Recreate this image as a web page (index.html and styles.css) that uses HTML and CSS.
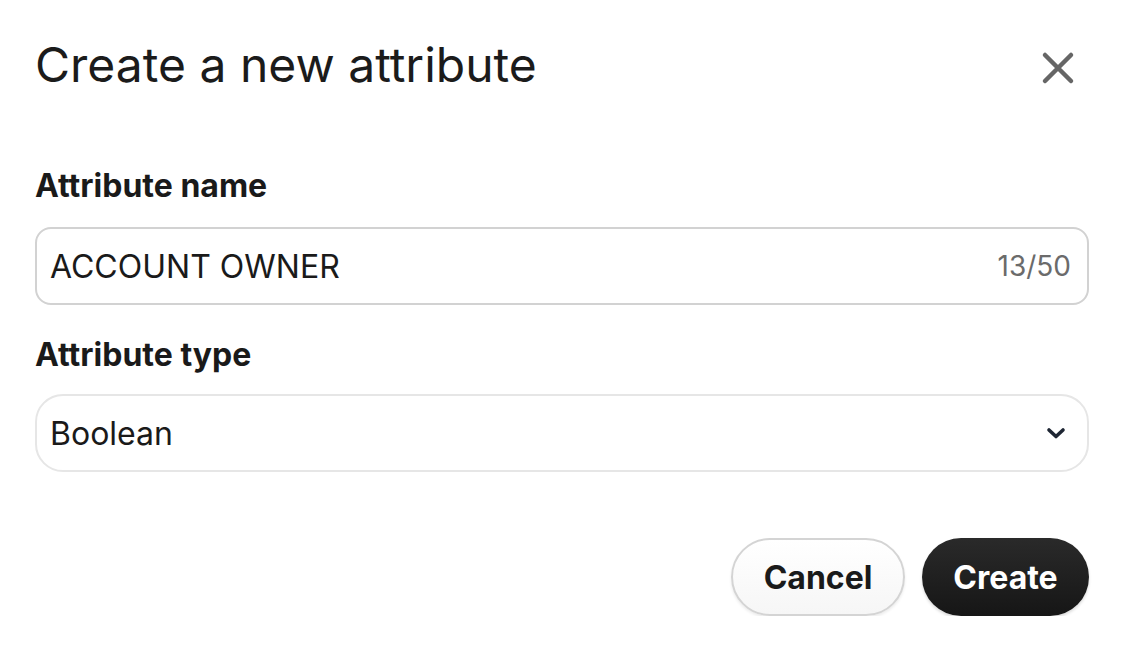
FILE: index.html
```html
<!DOCTYPE html>
<html lang="en">
<head>
<meta charset="utf-8">
<title>Create a new attribute</title>
<link rel="stylesheet" href="styles.css">
</head>
<body>
<div class="dialog">
  <div class="header">
    <h1 class="title">Create a new attribute</h1>
    <button class="close" aria-label="Close">
      <svg width="34" height="34" viewBox="0 0 34 34"><path d="M4 4 L30 30 M30 4 L4 30" stroke="#666" stroke-width="4.5" stroke-linecap="round" fill="none"/></svg>
    </button>
  </div>
  <div class="field field-name">
    <label class="label">Attribute name</label>
    <div class="input">
      <span class="value">ACCOUNT OWNER</span>
      <span class="counter">13/50</span>
    </div>
  </div>
  <div class="field field-type">
    <label class="label">Attribute type</label>
    <div class="select">
      <span class="value">Boolean</span>
      <svg class="chevron" width="22" height="14" viewBox="0 0 22 14"><path d="M4 4 L11 10.5 L18 4" stroke="#1e2633" stroke-width="3.6" stroke-linecap="round" stroke-linejoin="round" fill="none"/></svg>
    </div>
  </div>
  <div class="actions">
    <button class="btn btn-cancel">Cancel</button>
    <button class="btn btn-create">Create</button>
  </div>
</div>
</body>
</html>
```
FILE: styles.css
```css
html, body {
  margin: 0;
  padding: 0;
  background: #ffffff;
}
body {
  font-family: Inter, "Noto Sans", sans-serif;
  color: #1a1a1a;
}
.dialog {
  padding: 37px 47px 0 35px;
}
.header {
  display: flex;
  justify-content: space-between;
  align-items: center;
  height: 56px;
}
.title {
  margin: 0;
  font-size: 48px;
  font-weight: 400;
  line-height: 56px;
  letter-spacing: 0;
  color: #1b1b1b;
}
.close {
  border: 0;
  background: none;
  padding: 0;
  margin-right: 14px;
  margin-top: 5px;
  width: 34px;
  height: 34px;
  display: flex;
}
.field {
  display: flex;
  flex-direction: column;
}
.field-name {
  margin-top: 74px;
}
.field-type {
  margin-top: 31px;
}
.label {
  font-size: 32px;
  font-weight: 700;
  line-height: 38px;
  color: #1a1a1a;
  margin-bottom: 22px;
}
.field-type .label {
  margin-bottom: 20px;
}
.input, .select {
  box-sizing: border-box;
  height: 78px;
  display: flex;
  align-items: center;
  justify-content: space-between;
  padding: 0 16px 0 13px;
  font-size: 32px;
}
.input {
  border: 2px solid #d2d2d2;
  border-radius: 16px;
}
.select {
  border: 2px solid #e6e6e6;
  border-radius: 28px;
  padding-right: 20px;
}
.value {
  color: #1a1a1a;
}
.counter {
  color: #6b6b6b;
  font-size: 28px;
}
.actions {
  display: flex;
  justify-content: flex-end;
  gap: 17px;
  margin-top: 66px;
}
.btn {
  height: 78px;
  border-radius: 39px;
  font-family: Inter, "Noto Sans", sans-serif;
  font-size: 32px;
  font-weight: 700;
  padding: 0;
  box-sizing: border-box;
}
.btn-cancel {
  width: 174px;
  background: linear-gradient(#ffffff, #f6f6f6);
  border: 2px solid #d4d4d4;
  color: #1a1a1a;
  box-shadow: 0 2px 3px rgba(0,0,0,0.08);
}
.btn-create {
  width: 167px;
  background: linear-gradient(#2a2a2a, #161616);
  border: 0;
  color: #ffffff;
  box-shadow: 0 2px 3px rgba(0,0,0,0.15);
}
```
